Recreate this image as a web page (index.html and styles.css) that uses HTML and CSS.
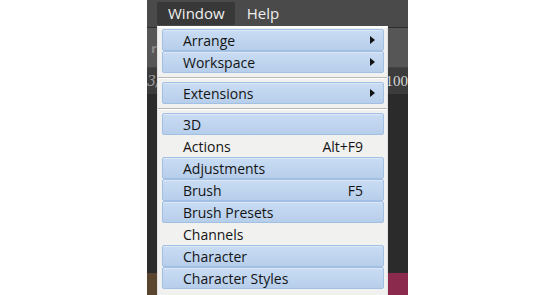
FILE: index.html
```html
<!doctype html>
<html lang="en">
<head>
<meta charset="UTF-8">
<title>Window menu</title>
<link rel="stylesheet" href="styles.css">
</head>
<body>
<div class="page">
 <div class="margin left"></div>
 <div class="app">
  <div class="menubar">
   <span class="top-item open">Window</span>
   <span class="top-item">Help</span>
  </div>
  <div class="options-bar"><span class="opt-glyph">r</span></div>
  <div class="tab-bar"><span class="tab-text">3/</span><span class="zoom-text">100</span></div>
  <div class="canvas">
   <div class="canvas-strip"></div>
  </div>

  <div class="dropdown">
   <div class="item hl">Arrange<span class="arrow"></span></div>
   <div class="item hl">Workspace<span class="arrow"></span></div>
   <div class="sep"></div>
   <div class="item hl">Extensions<span class="arrow"></span></div>
   <div class="sep"></div>
   <div class="item hl">3D</div>
   <div class="item">Actions<span class="key">Alt+F9</span></div>
   <div class="item hl">Adjustments</div>
   <div class="item hl">Brush<span class="key">F5</span></div>
   <div class="item hl">Brush Presets</div>
   <div class="item">Channels</div>
   <div class="item hl">Character</div>
   <div class="item hl">Character Styles</div>
  </div>
 </div>
 <div class="margin"></div>
</div>
</body>
</html>
```

FILE: styles.css
```css
body {
    margin: 0;
    background: #ffffff;
    font-family: "Open Sans", "Noto Sans", "DejaVu Sans", sans-serif;
}
.page {
    display: flex;
    width: 535px;
    height: 295px;
    overflow: hidden;
}
.margin {
    flex: 1;
    background: #ffffff;
}
.margin.left {
    flex: none;
    width: 147px;
}
.app {
    position: relative;
    width: 261px;
    flex: none;
    display: flex;
    flex-direction: column;
    background: #2b2b2b;
}

/* top menu bar */
.menubar {
    height: 28px;
    background: #4a4a4a;
    display: flex;
    align-items: center;
    padding-left: 10px;
    gap: 1px;
    border-bottom: 1px solid #2e2e2e;
    box-sizing: border-box;
}
.top-item {
    color: #f0f0f0;
    font-size: 15px;
    padding: 1px 10px 2px 11px;
    border-radius: 2px;
}
.top-item.open {
    background: #383838;
}

.options-bar {
    height: 40px;
    background: #565656;
    border-bottom: 1px solid #444;
    box-sizing: border-box;
    padding-left: 4px;
    display: flex;
    align-items: center;
}
.opt-glyph {
    color: #8a8a8a;
    font-size: 13px;
    font-weight: bold;
}
.tab-bar {
    height: 26px;
    background: #3c3c3c;
    display: flex;
    justify-content: space-between;
    align-items: center;
    font-family: "DejaVu Serif", serif;
    font-size: 14px;
}
.tab-text {
    color: #9a9a9a;
    font-style: italic;
}
.zoom-text {
    color: #d8d8d8;
    font-family: "Liberation Serif", serif;
    font-size: 15px;
}
.canvas {
    flex: 1;
    display: flex;
    flex-direction: column;
    justify-content: flex-end;
}
.canvas-strip {
    height: 22px;
    background: linear-gradient(90deg, #5a4530 0%, #5a4530 6%, #2b2b2b 6%, #2b2b2b 92%, #8c2a4e 92%);
}

/* dropdown menu */
.dropdown {
    position: absolute;
    left: 10px;
    top: 26px;
    width: 231px;
    bottom: -10px;
    background: #f1f1ef;
    border: 1px solid #e2e2e2;
    border-top: 2px solid #ffffff;
    box-sizing: border-box;
    padding: 1px 3px 0 4px;
}
.item {
    position: relative;
    height: 22px;
    line-height: 21px;
    padding-left: 20px;
    font-size: 14px;
    color: #141414;
    box-sizing: border-box;
    border: 1px solid transparent;
}
.item.hl {
    background: linear-gradient(#c9dcf3, #b7ceeb);
    border: 1px solid #a2bfe4;
    border-radius: 2px;
    box-shadow: inset 0 1px 0 rgba(255, 255, 255, 0.35);
}
.key {
    position: absolute;
    right: 20px;
    top: 0;
}
.arrow {
    position: absolute;
    right: 8px;
    top: 6px;
    width: 0;
    height: 0;
    border-left: 5px solid #111;
    border-top: 4px solid transparent;
    border-bottom: 4px solid transparent;
}
.sep {
    height: 9px;
    margin: 0 -3px 0 -4px;
    display: flex;
    flex-direction: column;
    justify-content: center;
}
.sep::before {
    content: "";
    border-top: 1px solid #bcb6b4;
    border-bottom: 1px solid #ffffff;
}
```
